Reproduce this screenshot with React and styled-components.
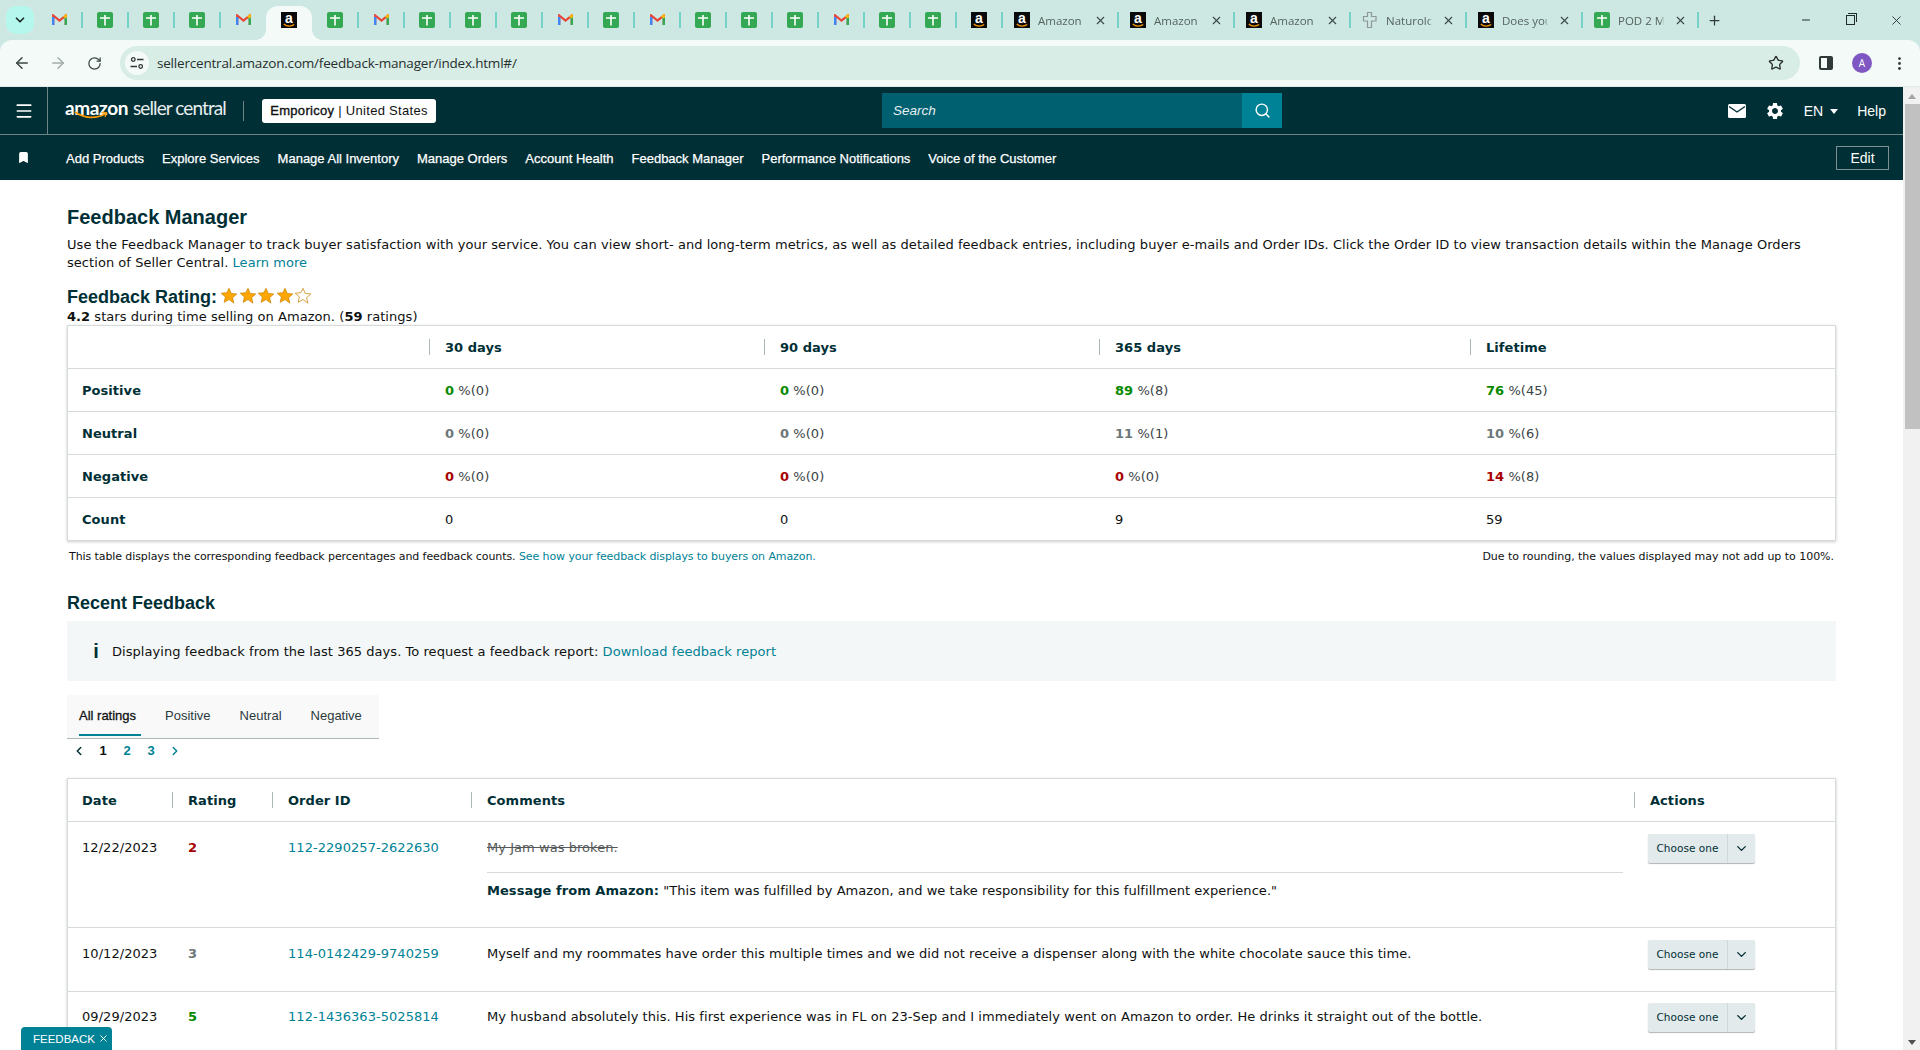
import styled, { createGlobalStyle } from "styled-components";
import { ArrowLeft, ArrowRight, RotateCw, ChevronDown, ChevronLeft, ChevronRight, Star, X, Plus, Minus, EllipsisVertical, Search as SearchGlyph, Menu, Bookmark } from "lucide-react";
import { MdSettings } from "react-icons/md";

const GlobalStyle = createGlobalStyle`
    html, body { margin: 0; padding: 0; height: 1050px; overflow: hidden; background: #fff; }
    * { box-sizing: border-box; }
`

const toneColors = { good: "#078a00", bad: "#a70000", plain: "#6c7778" }

const Screen = styled.div`
    width: 1920px;
    height: 1050px;
    overflow: hidden;
    position: relative;
    display: flex;
    flex-direction: column;
    font-family: "DejaVu Sans", sans-serif;
    color: #0f1111;
`

/* browser chrome */
const BrowserChrome = styled.div`
    flex: none;
    background: #cde8e2;
`
const TabStrip = styled.div`
    height: 40px;
    display: flex;
    align-items: center;
    padding-left: 6px;
    font-family: "Open Sans", sans-serif;
`
const TabListButton = styled.div`
    width: 28px;
    height: 28px;
    margin-right: 2px;
    border-radius: 10px;
    background: #b5f7ec;
    display: flex;
    align-items: center;
    justify-content: center;
    color: #1f2d2b;
`
const Tab = styled.div`
    position: relative;
    height: 34px;
    margin-top: 6px;
    width: ${p => p.$wide ? 116 : 46}px;
    flex: none;
    display: flex;
    align-items: center;
    justify-content: ${p => p.$wide ? "flex-start" : "center"};
    padding-left: ${p => p.$wide ? 12 : 0}px;
    padding-bottom: 6px;
    &::after {
        content: "";
        position: absolute;
        right: -1px;
        top: 6px;
        height: 16px;
        width: 2px;
        background: ${p => p.$hideSep ? "transparent" : "#74d3c6"};
    }
`
const ActiveTab = styled(Tab)`
    background: #f4faf8;
    border-radius: 12px 12px 0 0;
    z-index: 1;
    &::before, &::after {
        content: "";
        position: absolute;
        top: auto;
        bottom: 0;
        width: 10px;
        height: 10px;
        background: radial-gradient(circle at 0 0, transparent 9.5px, #f4faf8 10px);
    }
    &::before { left: -10px; }
    &::after {
        right: -10px;
        background: radial-gradient(circle at 100% 0, transparent 9.5px, #f4faf8 10px);
    }
`
const TabTitle = styled.span`
    width: 46px;
    margin-left: 8px;
    font-size: 11.5px;
    color: #55635f;
    white-space: nowrap;
    overflow: hidden;
    -webkit-mask-image: linear-gradient(90deg, #000 93%, transparent);
    mask-image: linear-gradient(90deg, #000 93%, transparent);
`
const TabClose = styled.span`
    display: flex;
    margin-left: 10px;
    color: #3b4745;
`
const NewTab = styled.span`
    display: flex;
    margin-left: 9px;
    color: #2f3a38;
`
const WindowControls = styled.div`
    margin-left: auto;
    display: flex;
    align-items: center;
    gap: 34px;
    padding-right: 16px;
    color: #1f2d2b;
`
const Restore = styled.span`
    position: relative;
    width: 9px;
    height: 10px;
    border: 1px solid #1f2d2b;
    &::before {
        content: "";
        position: absolute;
        top: -3px;
        left: 1px;
        width: 8px;
        height: 8px;
        border-top: 1px solid #1f2d2b;
        border-right: 1px solid #1f2d2b;
    }
`
const AmazonFavicon = styled.span`
    position: relative;
    width: 16px;
    height: 16px;
    flex: none;
    background: #0a0a0a;
    color: #fff;
    font: bold 14px/12px "Liberation Sans", sans-serif;
    text-align: center;
    svg { position: absolute; left: 2px; bottom: 0; }
`
const Toolbar = styled.div`
    height: 47px;
    background: #f4faf8;
    border-radius: 12px 12px 0 0;
    display: flex;
    align-items: center;
    padding-left: 13px;
    color: #3b4745;
    border-bottom: 1px solid #e3eae8;
`
const ToolButton = styled.span`
    width: 18px;
    display: flex;
    justify-content: center;
    margin-right: ${p => p.$gap || 0}px;
    color: ${p => p.$dim ? "#a3adab" : "#3b4745"};
`
const AddressBar = styled.div`
    width: 1680px;
    height: 34px;
    background: #d9ede7;
    border-radius: 17px;
    display: flex;
    align-items: center;
    padding: 0 16px 0 5px;
    font: 13.5px "Open Sans", sans-serif;
    letter-spacing: -0.2px;
    color: #27302e;
`
const SiteInfo = styled.span`
    width: 24px;
    height: 24px;
    border-radius: 50%;
    background: #f4faf8;
    display: flex;
    align-items: center;
    justify-content: center;
    margin-right: 8px;
`
const ToolbarEnd = styled.div`
    display: flex;
    align-items: center;
    margin-left: 19px;
    gap: 19px;
`
const SidePanel = styled.span`
    width: 14px;
    height: 14px;
    border: 2px solid #2f3a38;
    border-right-width: 6px;
    border-radius: 2px;
`
const Avatar = styled.span`
    width: 20px;
    height: 20px;
    border-radius: 50%;
    background: #7e57c2;
    color: #fff;
    font: 10px/20px "Open Sans", sans-serif;
    text-align: center;
`

/* seller central */
const Body = styled.div`
    flex: 1;
    min-height: 0;
    display: flex;
`
const Page = styled.div`
    flex: 1;
    min-width: 0;
    display: flex;
    flex-direction: column;
`
const Scrollbar = styled.div`
    width: 17px;
    flex: none;
    background: #f1f1f1;
    display: flex;
    flex-direction: column;
    align-items: center;
    padding-top: 7px;
`
const ArrowUp = styled.span`
    border: 4px solid transparent;
    border-top: 0;
    border-bottom: 5px solid #a3a3a3;
`
const ArrowDown = styled.span`
    margin-top: auto;
    margin-bottom: 5px;
    border: 4px solid transparent;
    border-bottom: 0;
    border-top: 5px solid #505050;
`
const Thumb = styled.div`
    align-self: flex-end;
    width: 15px;
    height: 325px;
    margin-top: 5px;
    background: #c1c1c1;
`
const TopBar = styled.div`
    height: 48px;
    flex: none;
    background: #002f36;
    border-bottom: 1px solid #6e8487;
    display: flex;
    align-items: center;
    color: #fff;
    font-family: "Liberation Sans", sans-serif;
`
const MenuButton = styled.div`
    width: 48px;
    height: 100%;
    display: flex;
    align-items: center;
    justify-content: center;
    border-right: 1px solid #6e8487;
`
const Logo = styled.div`
    position: relative;
    margin-left: 17px;
    width: 178px;
    height: 30px;
    display: flex;
    align-items: baseline;
    white-space: nowrap;
    font-family: Lato, sans-serif;
    font-size: 19px;
    line-height: 24px;
    b { font-weight: 700; margin-right: 5px; letter-spacing: -0.4px; }
    span { font-weight: 400; color: #e8eeee; letter-spacing: -0.9px; }
    svg { position: absolute; left: 9px; top: 15px; }
`
const LogoRule = styled.div`
    width: 1px;
    height: 20px;
    background: #6e8487;
`
const StoreBox = styled.div`
    margin-left: 18px;
    width: 174px;
    height: 24px;
    background: #fff;
    border-radius: 3px;
    color: #0f1111;
    font-size: 13px;
    letter-spacing: 0.3px;
    line-height: 24px;
    text-align: center;
    white-space: nowrap;
    b { font-weight: 400; -webkit-text-stroke: 0.35px #0f1111; }
`
const SearchBox = styled.div`
    margin-left: 446px;
    width: 400px;
    height: 35px;
    display: flex;
    background: #006070;
`
const SearchField = styled.div`
    flex: 1;
    padding-left: 11px;
    font: italic 13.5px/36px "Liberation Sans", sans-serif;
    color: #e6f0f1;
`
const SearchButton = styled.div`
    width: 40px;
    background: #008296;
    display: flex;
    align-items: center;
    justify-content: center;
`
const TopRight = styled.div`
    margin-left: auto;
    padding-right: 17px;
    display: flex;
    align-items: center;
    font-size: 14px;
`
const MailIcon = styled.svg`
    margin-right: 19px;
`
const GearWrap = styled.span`
    display: flex;
    margin-right: 19px;
`
const Language = styled.span`
    margin-right: 19px;
`
const Caret = styled.span`
    display: inline-block;
    margin-left: 7px;
    vertical-align: 2px;
    border: 4px solid transparent;
    border-bottom: 0;
    border-top: 5px solid #fff;
`
const NavBar = styled.div`
    height: 45px;
    flex: none;
    background: #002f36;
    display: flex;
    align-items: center;
    color: #fff;
    font-family: "Liberation Sans", sans-serif;
    padding: 2px 14px 0 17px;
`
const NavIcon = styled.span`
    width: 14px;
    display: flex;
    margin-right: 35px;
    margin-top: -3px;
`
const NavItem = styled.span`
    font-size: 13px;
    margin-right: 18px;
    white-space: nowrap;
    -webkit-text-stroke: 0.25px #fff;
`
const EditButton = styled.div`
    margin-left: auto;
    width: 53px;
    height: 24px;
    margin-top: -1px;
    border: 1px solid #7d9093;
    font-size: 14px;
    line-height: 22px;
    text-align: center;
`
const Content = styled.div`
    padding: 25px 67px 0;
    font-size: 13px;
    line-height: 18px;
    letter-spacing: 0.05px;
`
const Heading = styled.h1`
    margin: 0;
    font: bold 20px/24px "Liberation Sans", sans-serif;
    letter-spacing: 0;
    color: #002f36;
`
const Intro = styled.div`
    margin-top: 7px;
    color: #0f1111;
`
const IntroLine = styled.div`
    height: 18px;
`
const Link = styled.a`
    color: #008296;
    text-decoration: none;
`
const RatingLine = styled.div`
    display: flex;
    align-items: center;
    margin-top: 15px;
    height: 20px;
    font: bold 18px/20px "Liberation Sans", sans-serif;
    letter-spacing: 0;
    color: #002f36;
`
const Stars = styled.span`
    display: flex;
    margin-left: 3px;
    margin-top: -2px;
`
const Summary = styled.div`
    margin-top: 1px;
    height: 18px;
`
const DataTable = styled.div`
    margin-top: -1px;
    border: 1px solid #d5dbdb;
    border-bottom-width: ${p => p.$open ? 0 : 1}px;
    box-shadow: 0 1px 3px rgba(0, 0, 0, 0.2);
    font-size: 13px;
`
const Row = styled.div`
    display: grid;
    grid-template-columns: ${p => p.$cols};
    height: ${p => p.$h || 43}px;
    border-bottom: ${p => p.$last ? 0 : 1}px solid #d5dbdb;
`
const HeadCell = styled.div`
    position: relative;
    padding-left: ${p => p.$first ? 14 : 16}px;
    line-height: 44px;
    font-weight: 700;
    color: #002f36;
    &::before {
        content: "";
        display: ${p => p.$first ? "none" : "block"};
        position: absolute;
        left: 0;
        top: 13px;
        height: 16px;
        width: 1px;
        background: #aab7b8;
    }
`
const Cell = styled.div`
    padding-left: ${p => p.$first ? 14 : 16}px;
    padding-top: ${p => p.$top || 13}px;
    line-height: 18px;
    font-weight: ${p => p.$bold ? 700 : 400};
    color: ${p => p.$bold ? "#002f36" : "#0f1111"};
`
const Metric = styled.b`
    color: ${p => toneColors[p.$tone]};
`
const Muted = styled.span`
    color: #3b4345;
`
const NoteRow = styled.div`
    display: flex;
    justify-content: space-between;
    margin-top: 8px;
    padding: 0 2px;
    font-size: 11px;
    letter-spacing: -0.09px;
    line-height: 16px;
    color: #0f1111;
`
const NoteEnd = styled.span`
    letter-spacing: -0.03px;
`
const SubHeading = styled.h2`
    margin: 27px 0 0;
    font: bold 18px/22px "Liberation Sans", sans-serif;
    letter-spacing: 0;
    color: #002f36;
`
const InfoBox = styled.div`
    margin-top: 7px;
    height: 60px;
    background: #f4f7f7;
    display: flex;
    align-items: center;
    padding-left: 27px;
    padding-top: 1px;
`
const InfoIcon = styled.span`
    width: 4px;
    margin-right: 14px;
    font: bold 20px/15px "Liberation Sans", sans-serif;
    color: #002f36;
    display: flex;
    justify-content: center;
`
const Tabs = styled.div`
    margin-top: 14px;
    width: 312px;
    height: 44px;
    background: #f9f9f9;
    border-bottom: 1px solid #aab7b8;
    display: flex;
    padding-left: 12px;
    font: 13px/42px "Liberation Sans", sans-serif;
    letter-spacing: 0;
`
const RatingTab = styled.span`
    height: 41px;
    margin-right: ${p => p.$gap}px;
    color: ${p => p.$active ? "#0f1111" : "#2b3a3c"};
    -webkit-text-stroke: ${p => p.$active ? "0.3px" : "0"};
    border-bottom: ${p => p.$active ? "2px solid #008296" : "0"};
    padding-right: ${p => p.$active ? 5 : 0}px;
`
const Pager = styled.div`
    display: flex;
    align-items: center;
    height: 24px;
    padding-left: 5px;
    font: bold 13px/24px "Liberation Sans", sans-serif;
    letter-spacing: 0;
`
const PageNum = styled.span`
    width: 24px;
    text-align: center;
    color: ${p => p.$current ? "#0f1111" : "#008296"};
`
const PagerArrow = styled.span`
    display: flex;
    margin-right: ${p => p.$gap || 0}px;
    margin-left: ${p => p.$left || 0}px;
    color: ${p => p.$on ? "#008296" : "#002f36"};
`
const RecentTable = styled(DataTable)`
    margin-top: 15px;
`
const RatingValue = styled.b`
    color: ${p => toneColors[p.$tone]};
`
const Struck = styled.div`
    text-decoration: line-through;
    color: #565959;
    padding-bottom: 15px;
    border-bottom: 1px solid #d5dbdb;
    margin-right: 11px;
`
const AmazonMessage = styled.div`
    margin-top: 9px;
    b { color: #002f36; }
`
const ActionCell = styled.div`
    padding-top: ${p => p.$top}px;
    padding-left: 14px;
`
const ActionButton = styled.div`
    width: 107px;
    height: 29px;
    border-radius: 2px;
    background: #e3eaeb;
    box-shadow: 0 1px 1px rgba(0, 0, 0, 0.3);
    display: flex;
    align-items: center;
    font-size: 10.5px;
    color: #002f36;
`
const ActionLabel = styled.span`
    width: 80px;
    line-height: 29px;
    text-align: center;
    border-right: 1px solid #d0d9da;
`
const ActionArrow = styled.span`
    flex: 1;
    display: flex;
    justify-content: center;
`
const FeedbackPill = styled.div`
    position: absolute;
    left: 21px;
    bottom: 0;
    width: 91px;
    height: 23px;
    background: #008296;
    border-radius: 4px 4px 0 0;
    color: #fff;
    font: 11.5px/24px "Liberation Sans", sans-serif;
    padding-left: 12px;
    display: flex;
    align-items: center;
    gap: 3px;
`

const SheetIcon = () => (
    <svg width="16" height="16" viewBox="0 0 16 16">
        <rect width="16" height="16" rx="2" fill="#34a853"/>
        <path d="M3 6h10M8 3v10.500" stroke="#fff" strokeWidth="1.6"/>
    </svg>
)

const GmailIcon = () => (
    <svg width="15" height="12" viewBox="0 0 15 12">
        <path d="M1.200 11V1.500l6.300 5 6.300-5V11" fill="none" stroke="#ea4335" strokeWidth="2.200"/>
        <path d="M1.200 11V3" stroke="#4285f4" strokeWidth="2.400"/>
        <path d="M13.800 11V3" stroke="#34a853" strokeWidth="2.400"/>
        <path d="M11.500 3.300 13.800 1.500V4" stroke="#fbbc04" strokeWidth="2"/>
    </svg>
)

const AmazonIcon = () => (
    <AmazonFavicon>
        a
        <svg width="12" height="5" viewBox="0 0 12 5">
            <path d="M.8 1c3 2.800 7.400 2.800 10.400.6" fill="none" stroke="#ff9900" strokeWidth="1.300"/>
        </svg>
    </AmazonFavicon>
)

const PuzzleIcon = () => (
    <svg width="16" height="18" viewBox="0 0 16 18" fill="none" stroke="#8d9796" strokeWidth="1.200">
        <path d="M5.500 1.500h4v4h4.500v4.500h-4.500v6.500h-4v-6.500H1.500V5.500h4z"/>
    </svg>
)

const SiteIcon = () => (
    <svg width="14" height="14" viewBox="0 0 14 14" fill="none" stroke="#2f3a38" strokeWidth="1.300">
        <circle cx="3.300" cy="3.500" r="1.800"/>
        <path d="M7 3.500h6.500M.5 10.500H7"/>
        <circle cx="10.700" cy="10.500" r="1.800"/>
    </svg>
)

const StarIcon = ({ filled }) => (
    <svg width="18" height="18" viewBox="0 0 24 24" style={{ marginRight: 0.6 }}>
        <path d="M12 1.800l3 6.800 7.400.7-5.600 4.900 1.700 7.300L12 16.700l-6.500 3.800 1.700-7.300-5.600-4.900 7.400-.7z" fill={filled ? "#ffa700" : "#fff"} stroke="#c9860a" strokeWidth="1"/>
    </svg>
)

const compactTabs = ["m", "s", "s", "s", "m", "a", "s", "m", "s", "s", "s", "m", "s", "m", "s", "s", "s", "m", "s", "s", "a"]
const wideTabs = [
    { icon: "a", title: "Amazon" },
    { icon: "a", title: "Amazon" },
    { icon: "a", title: "Amazon" },
    { icon: "p", title: "Naturolog" },
    { icon: "a", title: "Does your" },
    { icon: "s", title: "POD 2 Ma" },
]
const icons = { m: <GmailIcon/>, s: <SheetIcon/>, a: <AmazonIcon/>, p: <PuzzleIcon/> }
const navItems = ["Add Products", "Explore Services", "Manage All Inventory", "Manage Orders", "Account Health", "Feedback Manager", "Performance Notifications", "Voice of the Customer"]

const statCols = "361px 335px 335px 371px 1fr"
const statRows = [
    { label: "Positive", tone: "good", cells: [["0", "(0)"], ["0", "(0)"], ["89", "(8)"], ["76", "(45)"]] },
    { label: "Neutral", tone: "plain", cells: [["0", "(0)"], ["0", "(0)"], ["11", "(1)"], ["10", "(6)"]] },
    { label: "Negative", tone: "bad", cells: [["0", "(0)"], ["0", "(0)"], ["0", "(0)"], ["14", "(8)"]] },
]

const recentCols = "104px 100px 199px 1163px 1fr"
const recent = [
    { date: "12/22/2023", rating: "2", tone: "bad", order: "112-2290257-2622630", h: 106, pad: 17, btn: 12, struck: "My Jam was broken.", message: "\"This item was fulfilled by Amazon, and we take responsibility for this fulfillment experience.\"" },
    { date: "10/12/2023", rating: "3", tone: "plain", order: "114-0142429-9740259", h: 64, pad: 17, btn: 12, text: "Myself and my roommates have order this multiple times and we did not receive a dispenser along with the white chocolate sauce this time." },
    { date: "09/29/2023", rating: "5", tone: "good", order: "112-1436363-5025814", h: 64, pad: 16, btn: 11, text: "My husband absolutely this. His first experience was in FL on 23-Sep and I immediately went on Amazon to order. He drinks it straight out of the bottle." },
]

export default function App(){
    return(
    <Screen>
        <GlobalStyle/>
        <BrowserChrome>
            <TabStrip>
                <TabListButton><ChevronDown size={14} strokeWidth={3}/></TabListButton>
                {compactTabs.map((t, i) => i === 5
                    ? <ActiveTab key={i}>{icons[t]}</ActiveTab>
                    : <Tab key={i} $hideSep={i === 4}>{icons[t]}</Tab>
                )}
                {wideTabs.map((t, i) => (
                    <Tab key={i} $wide>
                        {icons[t.icon]}
                        <TabTitle>{t.title}</TabTitle>
                        <TabClose><X size={13}/></TabClose>
                    </Tab>
                ))}
                <NewTab><Plus size={15}/></NewTab>
                <WindowControls>
                    <Minus size={12}/>
                    <Restore/>
                    <X size={15} strokeWidth={1.4}/>
                </WindowControls>
            </TabStrip>
            <Toolbar>
                <ToolButton $gap={18}><ArrowLeft size={18}/></ToolButton>
                <ToolButton $dim $gap={18}><ArrowRight size={18}/></ToolButton>
                <ToolButton $gap={17}><RotateCw size={15}/></ToolButton>
                <AddressBar>
                    <SiteInfo><SiteIcon/></SiteInfo>
                    sellercentral.amazon.com/feedback-manager/index.html#/
                    <Star size={16} style={{ marginLeft: "auto" }}/>
                </AddressBar>
                <ToolbarEnd>
                    <SidePanel/>
                    <Avatar>A</Avatar>
                    <EllipsisVertical size={17} color="#2f3a38"/>
                </ToolbarEnd>
            </Toolbar>
        </BrowserChrome>
        <Body>
            <Page>
                <TopBar>
                    <MenuButton><Menu size={20} strokeWidth={2}/></MenuButton>
                    <Logo>
                        <b>amazon</b><span>seller central</span>
                        <svg width="34" height="9" viewBox="0 0 34 9">
                            <path d="M1 1c9 6.500 21 7 30 2" fill="none" stroke="#ff9900" strokeWidth="1.700"/>
                            <path d="M27.500 1.500l5 .2-1.500 4.300" fill="none" stroke="#ff9900" strokeWidth="1.300"/>
                        </svg>
                    </Logo>
                    <LogoRule/>
                    <StoreBox><b>Emporicoy</b> | United States</StoreBox>
                    <SearchBox>
                        <SearchField>Search</SearchField>
                        <SearchButton><SearchGlyph size={17}/></SearchButton>
                    </SearchBox>
                    <TopRight>
                        <MailIcon width="18" height="14" viewBox="0 0 18 14">
                            <rect width="18" height="14" rx="1.500" fill="#fff"/>
                            <path d="M1 2.500l8 5.500 8-5.500" fill="none" stroke="#002f36" strokeWidth="1.400"/>
                        </MailIcon>
                        <GearWrap><MdSettings size={20} color="#fff"/></GearWrap>
                        <Language>EN<Caret/></Language>
                        <span>Help</span>
                    </TopRight>
                </TopBar>
                <NavBar>
                    <NavIcon><Bookmark size={13} fill="#fff" color="#fff"/></NavIcon>
                    {navItems.map(item => <NavItem key={item}>{item}</NavItem>)}
                    <EditButton>Edit</EditButton>
                </NavBar>
                <Content>
                    <Heading>Feedback Manager</Heading>
                    <Intro>
                        <IntroLine>Use the Feedback Manager to track buyer satisfaction with your service. You can view short- and long-term metrics, as well as detailed feedback entries, including buyer e-mails and Order IDs. Click the Order ID to view transaction details within the Manage Orders</IntroLine>
                        <IntroLine>section of Seller Central. <Link>Learn more</Link></IntroLine>
                    </Intro>
                    <RatingLine>
                        Feedback Rating:
                        <Stars>
                            {[1, 2, 3, 4, 5].map(n => <StarIcon key={n} filled={n < 5}/>)}
                        </Stars>
                    </RatingLine>
                    <Summary><b>4.2</b> stars during time selling on Amazon. (<b>59</b> ratings)</Summary>
                    <DataTable>
                        <Row $cols={statCols}>
                            <HeadCell $first/>
                            <HeadCell>30 days</HeadCell>
                            <HeadCell>90 days</HeadCell>
                            <HeadCell>365 days</HeadCell>
                            <HeadCell>Lifetime</HeadCell>
                        </Row>
                        {statRows.map(row => (
                            <Row key={row.label} $cols={statCols}>
                                <Cell $first $bold>{row.label}</Cell>
                                {row.cells.map(([pct, count], i) => (
                                    <Cell key={i}>
                                        <Metric $tone={row.tone}>{pct}</Metric> <Muted>%{count}</Muted>
                                    </Cell>
                                ))}
                                <Cell/>
                            </Row>
                        ))}
                        <Row $cols={statCols} $h={42} $last>
                            <Cell $first $bold>Count</Cell>
                            <Cell>0</Cell>
                            <Cell>0</Cell>
                            <Cell>9</Cell>
                            <Cell>59</Cell>
                        </Row>
                    </DataTable>
                    <NoteRow>
                        <span>This table displays the corresponding feedback percentages and feedback counts. <Link>See how your feedback displays to buyers on Amazon.</Link></span>
                        <NoteEnd>Due to rounding, the values displayed may not add up to 100%.</NoteEnd>
                    </NoteRow>
                    <SubHeading>Recent Feedback</SubHeading>
                    <InfoBox>
                        <InfoIcon>i</InfoIcon>
                        <span>Displaying feedback from the last 365 days. To request a feedback report: <Link>Download feedback report</Link></span>
                    </InfoBox>
                    <Tabs>
                        <RatingTab $active $gap={24}>All ratings</RatingTab>
                        <RatingTab $gap={29}>Positive</RatingTab>
                        <RatingTab $gap={29}>Neutral</RatingTab>
                        <RatingTab $gap={0}>Negative</RatingTab>
                    </Tabs>
                    <Pager>
                        <PagerArrow $gap={5}><ChevronLeft size={14} strokeWidth={2.5}/></PagerArrow>
                        <PageNum $current>1</PageNum>
                        <PageNum>2</PageNum>
                        <PageNum>3</PageNum>
                        <PagerArrow $on $left={5}><ChevronRight size={14} strokeWidth={2.5}/></PagerArrow>
                    </Pager>
                    <RecentTable $open>
                        <Row $cols={recentCols}>
                            <HeadCell $first>Date</HeadCell>
                            <HeadCell>Rating</HeadCell>
                            <HeadCell>Order ID</HeadCell>
                            <HeadCell>Comments</HeadCell>
                            <HeadCell>Actions</HeadCell>
                        </Row>
                        {recent.map(r => (
                            <Row key={r.order} $cols={recentCols} $h={r.h}>
                                <Cell $first $top={r.pad}>{r.date}</Cell>
                                <Cell $top={r.pad}><RatingValue $tone={r.tone}>{r.rating}</RatingValue></Cell>
                                <Cell $top={r.pad}><Link>{r.order}</Link></Cell>
                                <Cell $top={r.pad}>
                                    {r.struck ? (
                                        <>
                                            <Struck>{r.struck}</Struck>
                                            <AmazonMessage><b>Message from Amazon:</b> {r.message}</AmazonMessage>
                                        </>
                                    ) : r.text}
                                </Cell>
                                <ActionCell $top={r.btn}>
                                    <ActionButton>
                                        <ActionLabel>Choose one</ActionLabel>
                                        <ActionArrow><ChevronDown size={15} strokeWidth={2.2}/></ActionArrow>
                                    </ActionButton>
                                </ActionCell>
                            </Row>
                        ))}
                    </RecentTable>
                </Content>
            </Page>
            <Scrollbar>
                <ArrowUp/>
                <Thumb/>
                <ArrowDown/>
            </Scrollbar>
        </Body>
        <FeedbackPill>FEEDBACK <X size={11}/></FeedbackPill>
    </Screen>
    )
}
